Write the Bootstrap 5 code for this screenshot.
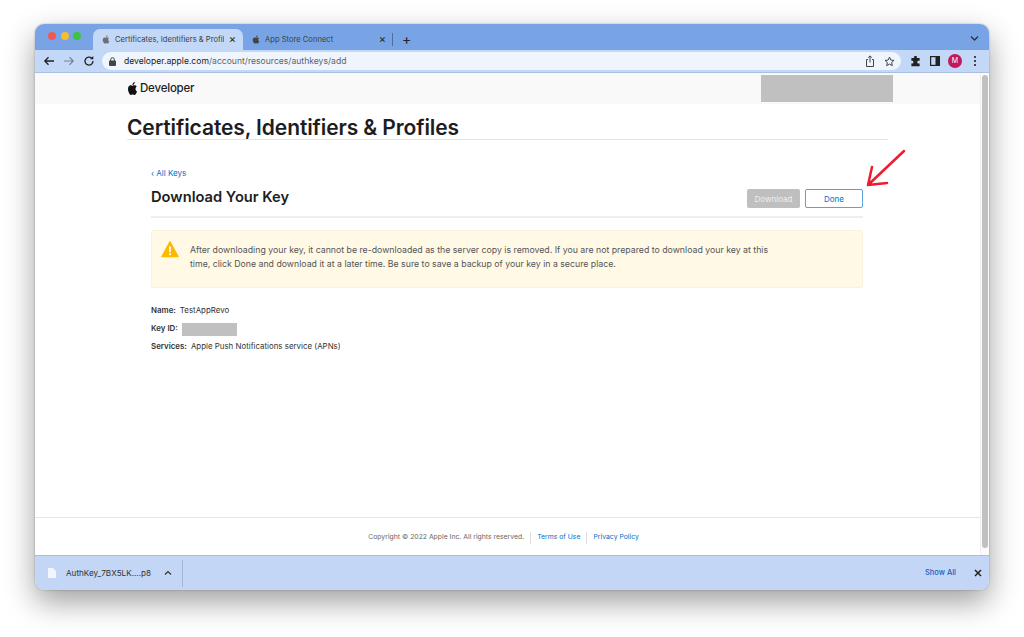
<!DOCTYPE html>
<html lang="en"><head><meta charset="utf-8"><title>Download Your Key</title>
<link rel="stylesheet" href="https://cdn.jsdelivr.net/npm/bootstrap@5.3.0/dist/css/bootstrap.min.css">
<style>
html,body{height:637px;overflow:hidden;background:#fff}
body{padding:24px 35px 47px;font-family:Inter,"Liberation Sans",sans-serif;color:#1d1d1f}
.win{height:566px;border-radius:9px;overflow:hidden;box-shadow:0 12px 30px rgba(0,0,0,.38),0 0 2px rgba(0,0,0,.3);background:#fff}
.tabstrip{height:26px;background:#78a4e6;padding:5px 0 0 13px;flex:none}
.dot{width:8px;height:8px;border-radius:50%}
.lights{width:45px;padding-top:3px;height:21px;gap:4.500px}
.tabx{height:21px;width:150px;font-size:7.600px;padding:0 7px 0 9px;color:#3c4043;white-space:nowrap;border-radius:7px 7px 0 0}
.tabx.on{background:#c3d7f7}
.tabtxt{overflow:hidden;flex:1;margin:0 5px;min-width:0}
.tabclose{font-size:11px;line-height:1;color:#222}
.sep1{width:1px;height:13px;background:#4f6f9f;margin:0 9px 0 -1px}
.plus{font-size:14px;line-height:1;color:#222}
.toolbar{height:23px;background:#c3d7f7;border-bottom:1px solid #a9c0e2;flex:none;padding:0 8px}
.omni{width:799px;height:18px;background:#eff5fd;border-radius:9px;margin:0 9px 0 7px;font-size:8.600px;padding:0 6px 0 7px;color:#5f6368}
.omni b{font-weight:400;color:#202124}
.avatar{width:14px;height:14px;border-radius:50%;background:#c2185b;color:#fff;font-size:7px}
.page{flex:1;min-height:0}
.pagebody{flex:1;min-width:0}
.scrolltrack{width:9px;background:#fbfbfb;border-left:1px solid #eee;padding:2px 1px 7px 1px;flex:none}
.thumb{background:#c1c1c1;border-radius:4px;height:100%}
.devhead{height:31px;background:#f9f9f9;padding:2px 87px 0 92px;flex:none}
.devname{font-size:11.500px;font-weight:500;letter-spacing:-.2px;margin-left:2px}
.redact{background:#c0c0c0}
.rhead{width:132px;height:27px}
.main{padding:0 92px 0 92px;flex:1}
.bigtitle{font-size:21px;font-weight:600;letter-spacing:-.1px;line-height:26px;margin:11px 0 0;border-bottom:1px solid #e5e5e5;height:25px;color:#1d1d1f}
.content{padding:27px 25px 0 24px}
.back{font-size:8px;color:#0070c9;text-decoration:none;line-height:12px;display:block}
.subhead{height:35px;border-bottom:2px solid #eee;margin-top:4px}
.subtitle{font-size:14.700px;font-weight:600;line-height:20px;margin:0;padding-top:4px;color:#1d1d1f}
.btnwrap{padding-top:6px}
.btnx{font-size:8px;height:19px;line-height:1;padding:0;border-radius:2px}
.btndl{width:53px;background:#bfbfbf;color:#eee;border:0}
.btndone{width:58px;color:#0070c9;background:#fff;border:1px solid #5b9fdc;margin-left:5px}
.warn{margin-top:12px;background:#fff9e5;border:1px solid #faf3dc;border-radius:2px;height:58px;padding:10px 9px;color:#555;font-size:8.750px;line-height:14px}
.warn svg{flex:none}
.warn p{margin:2px 0 0 11px;width:600px}
.info{margin-top:14px;font-size:7.900px;color:#333}
.info .lab{font-weight:600;margin-right:4px}
.inforow{height:18px}
.rkey{width:55px;height:13px}
.foot{height:38px;border-top:1px solid #e5e5e5;font-size:6.850px;color:#666;flex:none;padding:2px 8px 0 0}
.foot a{color:#0070c9;text-decoration:none}
.fsep{border-left:1px solid #ddd;height:12px;margin:0 6px}
.dlbar{height:35px;background:#c3d6f5;border-top:1px solid #a9bedd;flex:none;padding-left:13px;font-size:8.150px;color:#333}
.dlname{margin:0 10px 0 10px;width:88px;white-space:nowrap}
.dlsep{width:1px;height:27px;background:#a5b6d2;margin-left:10px}
.showall{color:#1a5fc4;font-weight:500;font-size:7.500px;margin-right:18px}
.xclose{margin-right:7px}
.arrow{position:absolute;left:866px;top:148px}
</style></head><body>
<div class="win d-flex flex-column">
  <div class="tabstrip d-flex align-items-start">
    <div class="lights d-flex"><span class="dot" style="background:#ee5a52"></span><span class="dot" style="background:#f5bd2f"></span><span class="dot" style="background:#3ec33e"></span></div>
    <div class="tabx on d-flex align-items-center">
      <svg width="8" height="9" viewBox="0 0 16 16" fill="#6b6f75"><path d="M11.182.008C11.148-.03 9.923.023 8.857 1.18c-1.066 1.156-.902 2.482-.878 2.516.024.034 1.52.087 2.475-1.258.955-1.345.762-2.391.728-2.43Zm3.314 11.733c-.048-.096-2.325-1.234-2.113-3.422.212-2.189 1.675-2.789 1.698-2.854.023-.065-.597-.79-1.254-1.157a3.692 3.692 0 0 0-1.563-.434c-.108-.003-.483-.095-1.254.116-.508.139-1.653.589-1.968.607-.316.018-1.256-.522-2.267-.665-.647-.125-1.333.131-1.824.328-.49.196-1.422.754-2.074 2.237-.652 1.482-.311 3.83-.067 4.56.244.729.625 1.924 1.273 2.796.576.984 1.34 1.667 1.659 1.899.319.232 1.219.386 1.843.067.502-.308 1.408-.485 1.766-.472.357.013 1.061.154 1.782.539.571.197 1.111.115 1.652-.105.541-.221 1.324-1.059 2.238-2.758.347-.79.505-1.217.473-1.282Z"/></svg>
      <span class="tabtxt">Certificates, Identifiers &amp; Profil</span><span class="tabclose">×</span>
    </div>
    <div class="tabx d-flex align-items-center">
      <svg width="8" height="9" viewBox="0 0 16 16" fill="#444"><path d="M11.182.008C11.148-.03 9.923.023 8.857 1.18c-1.066 1.156-.902 2.482-.878 2.516.024.034 1.52.087 2.475-1.258.955-1.345.762-2.391.728-2.43Zm3.314 11.733c-.048-.096-2.325-1.234-2.113-3.422.212-2.189 1.675-2.789 1.698-2.854.023-.065-.597-.79-1.254-1.157a3.692 3.692 0 0 0-1.563-.434c-.108-.003-.483-.095-1.254.116-.508.139-1.653.589-1.968.607-.316.018-1.256-.522-2.267-.665-.647-.125-1.333.131-1.824.328-.49.196-1.422.754-2.074 2.237-.652 1.482-.311 3.83-.067 4.56.244.729.625 1.924 1.273 2.796.576.984 1.34 1.667 1.659 1.899.319.232 1.219.386 1.843.067.502-.308 1.408-.485 1.766-.472.357.013 1.061.154 1.782.539.571.197 1.111.115 1.652-.105.541-.221 1.324-1.059 2.238-2.758.347-.79.505-1.217.473-1.282Z"/></svg>
      <span class="tabtxt">App Store Connect</span><span class="tabclose">×</span>
    </div>
    <div class="d-flex align-items-center" style="height:20px"><span class="sep1"></span><span class="plus">+</span></div>
    <svg class="ms-auto" style="margin:6px 10px 0 0" width="9" height="7" viewBox="0 0 9 7"><path d="M1 1.500l3.500 3.500L8 1.500" fill="none" stroke="#333" stroke-width="1.300"/></svg>
  </div>
  <div class="toolbar d-flex align-items-center">
    <svg width="12" height="12" viewBox="0 0 12 12" class="me-2"><path d="M11 6H2M5.500 2.200L1.800 6l3.700 3.800" fill="none" stroke="#222" stroke-width="1.300"/></svg>
    <svg width="12" height="12" viewBox="0 0 12 12" class="me-2"><path d="M1 6h9M6.500 2.200L10.200 6 6.500 9.800" fill="none" stroke="#76818f" stroke-width="1.200"/></svg>
    <svg width="12" height="12" viewBox="0 0 12 12"><path d="M10 6a4 4 0 1 1-1.200-2.800" fill="none" stroke="#222" stroke-width="1.300"/><path d="M10.300 1v3.300H7z" fill="#222"/></svg>
    <div class="omni d-flex align-items-center">
      <svg width="7" height="9" viewBox="0 0 7 9" class="me-2"><rect y="3.500" width="7" height="5.500" rx="1" fill="#444"/><path d="M1.700 4V2.500a1.800 1.800 0 0 1 3.600 0V4" fill="none" stroke="#444"/></svg>
      <span><b>developer.apple.com</b>/account/resources/authkeys/add</span>
      <svg class="ms-auto" style="margin-right:9px" width="10" height="12" viewBox="0 0 10 12"><path d="M3 4.500H1.500v7h7v-7H7M5 7.500V1M3.200 2.600L5 .9l1.800 1.700" fill="none" stroke="#444"/></svg>
      <svg width="11" height="11" viewBox="0 0 24 24"><path d="M12 2.500l2.900 6.300 6.900.8-5.100 4.600 1.400 6.800-6.100-3.400-6.100 3.400 1.400-6.800L2.200 9.600l6.900-.8z" fill="none" stroke="#333" stroke-width="2"/></svg>
    </div>
    <svg width="11" height="11" viewBox="0 0 16 16" style="margin-right:9px"><path d="M6 1.500a2 2 0 0 1 4 0V3h4v4h-1.500a2 2 0 0 0 0 4H14v4H2v-4h1a2 2 0 0 0 0-4H2V3h4z" fill="#222"/></svg>
    <svg width="10" height="10" viewBox="0 0 10 10"><rect x=".6" y=".6" width="8.800" height="8.800" fill="none" stroke="#222" stroke-width="1.200"/><rect x="5.500" y="1" width="4" height="8" fill="#222"/></svg>
    <span class="avatar d-flex align-items-center justify-content-center ms-2">M</span>
    <svg width="4" height="12" viewBox="0 0 4 12" style="margin-left:11px"><circle cx="2" cy="2" r="1.100" fill="#222"/><circle cx="2" cy="6" r="1.100" fill="#222"/><circle cx="2" cy="10" r="1.100" fill="#222"/></svg>
  </div>
  <div class="page d-flex">
    <div class="pagebody d-flex flex-column">
      <div class="devhead d-flex align-items-start justify-content-between">
        <div class="d-flex align-items-center" style="height:27px">
          <svg width="11" height="13" viewBox="0 0 16 16" fill="#111" preserveAspectRatio="none"><path d="M11.182.008C11.148-.03 9.923.023 8.857 1.18c-1.066 1.156-.902 2.482-.878 2.516.024.034 1.52.087 2.475-1.258.955-1.345.762-2.391.728-2.43Zm3.314 11.733c-.048-.096-2.325-1.234-2.113-3.422.212-2.189 1.675-2.789 1.698-2.854.023-.065-.597-.79-1.254-1.157a3.692 3.692 0 0 0-1.563-.434c-.108-.003-.483-.095-1.254.116-.508.139-1.653.589-1.968.607-.316.018-1.256-.522-2.267-.665-.647-.125-1.333.131-1.824.328-.49.196-1.422.754-2.074 2.237-.652 1.482-.311 3.83-.067 4.56.244.729.625 1.924 1.273 2.796.576.984 1.34 1.667 1.659 1.899.319.232 1.219.386 1.843.067.502-.308 1.408-.485 1.766-.472.357.013 1.061.154 1.782.539.571.197 1.111.115 1.652-.105.541-.221 1.324-1.059 2.238-2.758.347-.79.505-1.217.473-1.282Z"/></svg>
          <span class="devname">Developer</span>
        </div>
        <div class="redact rhead"></div>
      </div>
      <div class="main">
        <h1 class="bigtitle">Certificates, Identifiers &amp; Profiles</h1>
        <div class="content">
          <a class="back" href="#">‹ All Keys</a>
          <div class="subhead d-flex justify-content-between align-items-start">
            <h2 class="subtitle">Download Your Key</h2>
            <div class="d-flex btnwrap">
              <button class="btn btnx btndl">Download</button>
              <button class="btn btnx btndone">Done</button>
            </div>
          </div>
          <div class="warn d-flex align-items-start">
            <svg width="18" height="17" viewBox="0 0 19 18"><path d="M9.500 1L18 16.500H1z" fill="#fbb900" stroke="#fbb900" stroke-width="1.500" stroke-linejoin="round"/><rect x="8.500" y="5.500" width="2" height="6.500" rx="1" fill="#fff"/><circle cx="9.500" cy="14" r="1.100" fill="#fff"/></svg>
            <p>After downloading your key, it cannot be re-downloaded as the server copy is removed. If you are not prepared to download your key at this time, click Done and download it at a later time. Be sure to save a backup of your key in a secure place.</p>
          </div>
          <div class="info">
            <div class="inforow d-flex align-items-center"><span class="lab">Name:</span>TestAppRevo</div>
            <div class="inforow d-flex align-items-center"><span class="lab">Key ID:</span><span class="redact rkey"></span></div>
            <div class="inforow d-flex align-items-center"><span class="lab">Services:</span>Apple Push Notifications service (APNs)</div>
          </div>
        </div>
      </div>
      <div class="foot d-flex align-items-center justify-content-center">
        <span>Copyright © 2022 Apple Inc. All rights reserved.</span><span class="fsep"></span><a href="#">Terms of Use</a><span class="fsep"></span><a href="#">Privacy Policy</a>
      </div>
    </div>
    <div class="scrolltrack"><div class="thumb"></div></div>
  </div>
  <div class="dlbar d-flex align-items-center">
    <svg width="8" height="10" viewBox="0 0 8 10"><path d="M0 0h5l3 3v7H0z" fill="#f2f5fb"/></svg>
    <span class="dlname">AuthKey_7BX5LK....p8</span>
    <svg width="8" height="6" viewBox="0 0 8 6"><path d="M1 4.500L4 1.500l3 3" fill="none" stroke="#333" stroke-width="1.200"/></svg>
    <span class="dlsep"></span>
    <span class="showall ms-auto">Show All</span>
    <svg class="xclose" width="8" height="8" viewBox="0 0 8 8"><path d="M1 1l6 6M7 1L1 7" stroke="#222" stroke-width="1.500"/></svg>
  </div>
</div>
<svg class="arrow" width="40" height="40" viewBox="0 0 40 40"><path d="M38 3L2 37M6 19L2 37L21 35" fill="none" stroke="#ee1c2e" stroke-width="2.500" stroke-linecap="round" stroke-linejoin="round"/></svg>
</body></html>
